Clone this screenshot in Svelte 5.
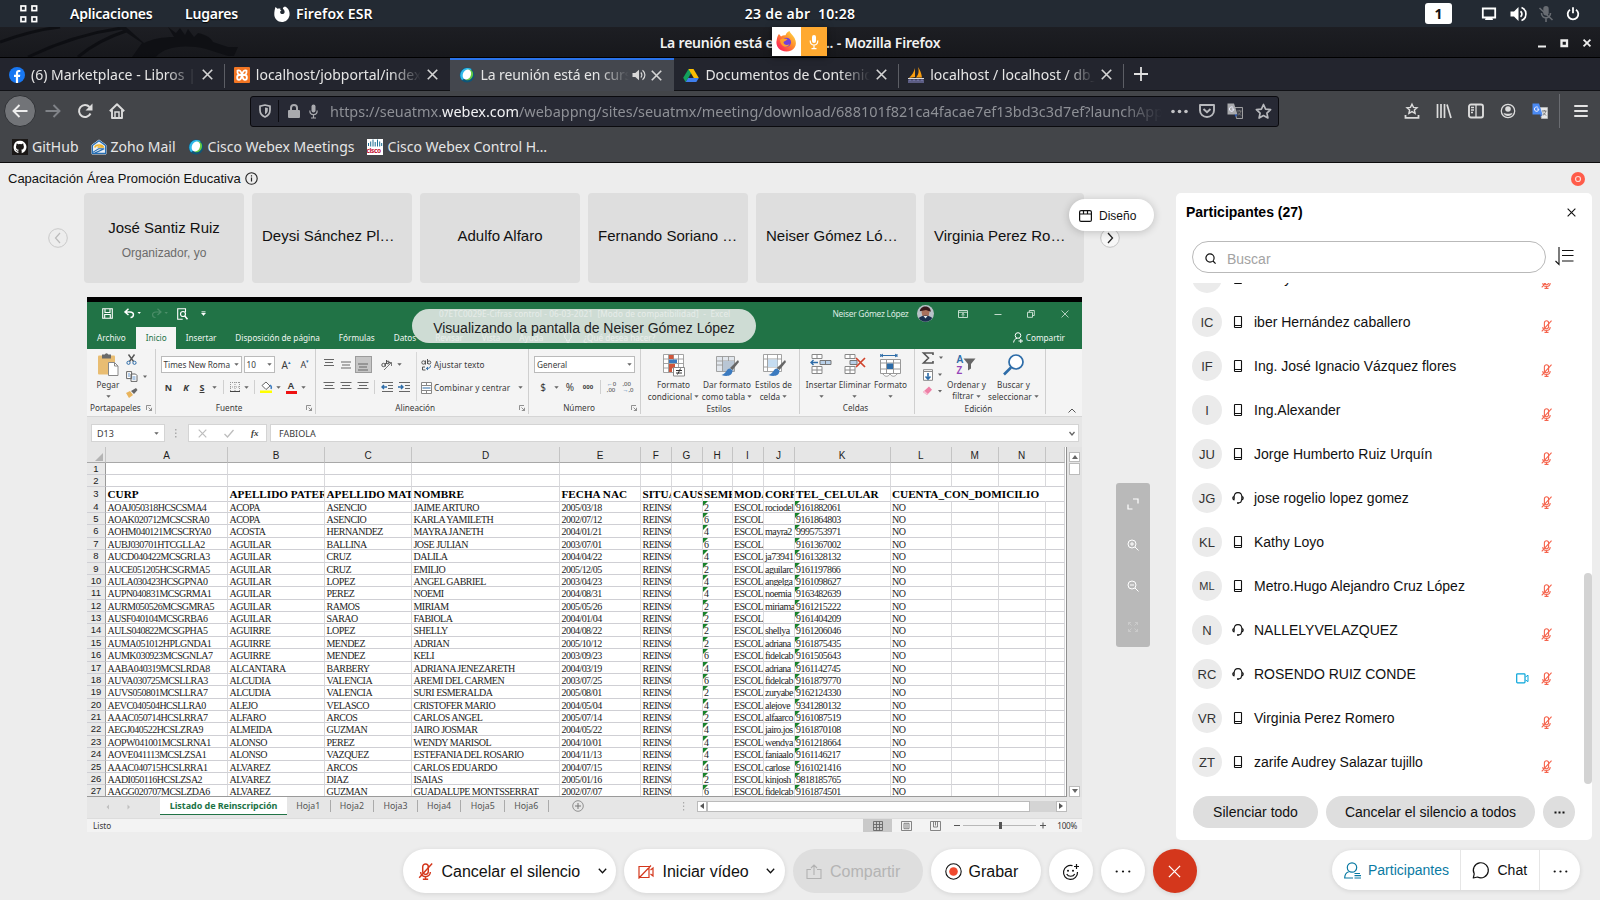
<script>
  const tabs = [
    { icon: 'fb', title: '(6) Marketplace - Libros | Facebook' },
    { icon: 'xampp', title: 'localhost/jobportal/index.php' },
    { icon: 'webex', title: 'La reunión está en curso...', active: true, audio: true },
    { icon: 'drive', title: 'Documentos de Contenido' },
    { icon: 'pma', title: 'localhost / localhost / db_jobs' }
  ];
  const tiles = [
    { name: 'José Santiz Ruiz', sub: 'Organizador, yo' },
    { name: 'Deysi Sánchez Pl…', long: true },
    { name: 'Adulfo Alfaro' },
    { name: 'Fernando Soriano …', long: true },
    { name: 'Neiser Gómez Ló…', long: true },
    { name: 'Virginia Perez Ro…', long: true }
  ];
  const people = [
    { ini: 'H', name: 'Henry', dev: 'phone' },
    { ini: 'IC', name: 'iber Hernández caballero', dev: 'phone' },
    { ini: 'IF', name: 'Ing. José Ignacio Vázquez flores', dev: 'phone' },
    { ini: 'I', name: 'Ing.Alexander', dev: 'phone' },
    { ini: 'JU', name: 'Jorge Humberto Ruiz Urquín', dev: 'phone' },
    { ini: 'JG', name: 'jose rogelio lopez gomez', dev: 'headset' },
    { ini: 'KL', name: 'Kathy Loyo', dev: 'phone' },
    { ini: 'ML', name: 'Metro.Hugo Alejandro Cruz López', dev: 'phone', small: true },
    { ini: 'N', name: 'NALLELYVELAZQUEZ', dev: 'headset' },
    { ini: 'RC', name: 'ROSENDO RUIZ CONDE', dev: 'headset', video: true },
    { ini: 'VR', name: 'Virginia Perez Romero', dev: 'phone' },
    { ini: 'ZT', name: 'zarife Audrey Salazar tujillo', dev: 'phone' }
  ];
  const letters = ['A', 'B', 'C', 'D', 'E', 'F', 'G', 'H', 'I', 'J', 'K', 'L', 'M', 'N', ''];
  const heads = ['CURP', 'APELLIDO PATERNO', 'APELLIDO MATERNO', 'NOMBRE', 'FECHA NAC', 'SITUACION', 'CAUSA', 'SEMESTRE', 'MODALIDAD', 'CORREO', 'TEL_CELULAR', 'CUENTA_CON_DOMICILIO', '', '', ''];
  const data = [
    ['AOAJ050318HCSCSMA4', 'ACOPA', 'ASENCIO', 'JAIME ARTURO', '2005/03/18', '2', 'rociodel', '9161882061'],
    ['AOAK020712MCSCSRA0', 'ACOPA', 'ASENCIO', 'KARLA YAMILETH', '2002/07/12', '6', '', '9161864803'],
    ['AOHM040121MCSCRYA0', 'ACOSTA', 'HERNANDEZ', 'MAYRA JANETH', '2004/01/21', '4', 'mayra2', '9995753971'],
    ['AUBJ030701HTCGLLA2', 'AGUILAR', 'BALLINA', 'JOSE JULIAN', '2003/07/01', '6', '', '9161367002'],
    ['AUCD040422MCSGRLA3', 'AGUILAR', 'CRUZ', 'DALILA', '2004/04/22', '4', 'ja73941', '9161328132'],
    ['AUCE051205HCSGRMA5', 'AGUILAR', 'CRUZ', 'EMILIO', '2005/12/05', '2', 'aguilarc', '9161197866'],
    ['AULA030423HCSGPNA0', 'AGUILAR', 'LOPEZ', 'ANGEL GABRIEL', '2003/04/23', '4', 'angelga', '9161098627'],
    ['AUPN040831MCSGRMA1', 'AGUILAR', 'PEREZ', 'NOEMI', '2004/08/31', '4', 'noemia', '9163482639'],
    ['AURM050526MCSGMRA5', 'AGUILAR', 'RAMOS', 'MIRIAM', '2005/05/26', '2', 'miriama', '9161215222'],
    ['AUSF040104MCSGRBA6', 'AGUILAR', 'SARAO', 'FABIOLA', '2004/01/04', '2', '', '9161404209'],
    ['AULS040822MCSGPHA5', 'AGUIRRE', 'LOPEZ', 'SHELLY', '2004/08/22', '2', 'shellya', '9161206046'],
    ['AUMA051012HPLGNDA1', 'AGUIRRE', 'MENDEZ', 'ADRIAN', '2005/10/12', '2', 'adriana', '9161875435'],
    ['AUMK030923MCSGNLA7', 'AGUIRRE', 'MENDEZ', 'KELI', '2003/09/23', '6', 'fidelcab', '9161505643'],
    ['AABA040319MCSLRDA8', 'ALCANTARA', 'BARBERY', 'ADRIANA JENEZARETH', '2004/03/19', '4', 'adriana', '9161142745'],
    ['AUVA030725MCSLLRA3', 'ALCUDIA', 'VALENCIA', 'AREMI DEL CARMEN', '2003/07/25', '6', 'fidelcab', '9161879770'],
    ['AUVS050801MCSLLRA7', 'ALCUDIA', 'VALENCIA', 'SURI ESMERALDA', '2005/08/01', '2', 'zuryabe', '9162124330'],
    ['AEVC040504HCSLLRA0', 'ALEJO', 'VELASCO', 'CRISTOFER MARIO', '2004/05/04', '4', 'alejove', '9341280132'],
    ['AAAC050714HCSLRRA7', 'ALFARO', 'ARCOS', 'CARLOS ANGEL', '2005/07/14', '2', 'alfaarco', '9161087519'],
    ['AEGJ040522HCSLZRA9', 'ALMEIDA', 'GUZMAN', 'JAIRO JOSMAR', '2004/05/22', '4', 'jairo.jos', '9161870108'],
    ['AOPW041001MCSLRNA1', 'ALONSO', 'PEREZ', 'WENDY MARISOL', '2004/10/01', '4', 'wendya', '9161218664'],
    ['AOVE041113MCSLZSA1', 'ALONSO', 'VAZQUEZ', 'ESTEFANIA DEL ROSARIO', '2004/11/13', '4', 'faniaalo', '9161146217'],
    ['AAAC040715HCSLRRA1', 'ALVAREZ', 'ARCOS', 'CARLOS EDUARDO', '2004/07/15', '4', 'carlose', '9161021416'],
    ['AADI050116HCSLZSA2', 'ALVAREZ', 'DIAZ', 'ISAIAS', '2005/01/16', '2', 'kinjosh', '9818185765'],
    ['AAGG020707MCSLZDA6', 'ALVAREZ', 'GUZMAN', 'GUADALUPE MONTSSERRAT', '2002/07/07', '6', 'fidelcab', '9161874501']
  ];
  const rows = data.map((d) => [d[0], d[1], d[2], d[3], d[4], 'REINSCRITO', '', d[5], 'ESCOL.', d[6], d[7], 'NO', '', '', '']);
  const blank = letters.map(() => '');
  const hojas = ['Hoja1', 'Hoja2', 'Hoja3', 'Hoja4', 'Hoja5', 'Hoja6'];
</script>

{#snippet webex(s)}
  <svg width={s} height={s} viewBox="0 0 16 16">
    <circle cx="8" cy="8" r="7.400" fill="#0f5578" />
    <path d="M3 13.200A7.400 7.400 0 0 1 12.500 2.100L9 9z" fill="#2fb9ea" />
    <path d="M9 2.500c4-.5 6 3 4.800 6.500-1 3.200-4 5-6.800 4z" fill="#62c944" />
    <ellipse cx="7.900" cy="7.500" rx="4" ry="5.200" fill="#fff" transform="rotate(25 7.900 7.500)" />
  </svg>
{/snippet}

{#snippet translate(a, b)}
  <svg width="17" height="16" viewBox="0 0 17 16">
    <path d="M7.500 4.500h8v11h-6z" fill={b} stroke="#bbb" stroke-width=".8" />
    <path d="M10 8h4.500M12.300 7v1M13.800 8c-.3 2-1.800 3.700-3 4.400M11 9.500l3 3" fill="none" stroke="#777" />
    <path d="M.5.5H7l3.500 11H.5z" fill={a} />
    <path d="M6.200 4.600A2.200 2.200 0 1 0 6.800 6H5" fill="none" stroke="#eef" stroke-width="1" />
    <path d="M7.500 11.500h3L8.500 14z" fill="#2456b5" />
  </svg>
{/snippet}

{#snippet closeX(s, c, w)}
  <svg width={s} height={s} viewBox="0 0 10 10"><path d="M.7.7l8.600 8.600M9.300.7L.7 9.300" stroke={c} stroke-width={w} fill="none" /></svg>
{/snippet}

{#snippet mutedMic(w, h, c)}
  <svg width={w} height={h} viewBox="0 0 12 14">
    <rect x="3.700" y=".8" width="4.600" height="8.600" rx="2.300" fill="none" stroke={c} stroke-width="1.200" />
    <path d="M2 7.500c0 5 8 5 8 0M6 11v2.200M3.800 13.400h4.400M11.500.5L.8 12.200" fill="none" stroke={c} stroke-width="1.200" />
  </svg>
{/snippet}

{#snippet caret()}
  <svg class="car" width="5" height="3" viewBox="0 0 5 3"><path d="M.3.3h4.400L2.500 2.700z" fill="#666" /></svg>
{/snippet}

{#snippet launch()}
  <svg class="launch" width="6" height="6" viewBox="0 0 6 6"><path d="M.5 5V.5H5M2.500 2.500l3 3M5.500 2.800v2.700H2.800" fill="none" stroke="#777" stroke-width=".8" /></svg>
{/snippet}

{#snippet lines(a, b, c, y)}
  <svg width="12" height="12" viewBox="0 0 12 12"><path d="M{a} {y}h{12 - 2 * a}M{b} {y + 3}h{12 - 2 * b}M{c} {y + 6}h{12 - 2 * c}" stroke="#666" stroke-width="1" /></svg>
{/snippet}

<div class="screen">
  <header class="top">
    <div class="left">
      <svg width="18" height="18" viewBox="0 0 18 18" fill="none" stroke="#fff" stroke-width="1.700"><rect x="1" y="1" width="4.600" height="4.600" /><rect x="12" y="1" width="4.600" height="4.600" /><rect x="1" y="12" width="4.600" height="4.600" /><rect x="12" y="12" width="4.600" height="4.600" /></svg>
      <b class="apl">Aplicaciones</b><b class="lug">Lugares</b>
      <svg class="ffx" width="16" height="16" viewBox="0 0 16 16"><path d="M1.500 1l2 1.800c1-.5 2-.5 3-.3C6 3.500 6.200 4 7.500 4.500c-1 .5-1.500.8-1.300 2 .5 2 3.600 2 4.300.2C11 5 10 3.500 9 3 8.500 2 9.500 1 11 .5 15 2.500 16 6 15.500 9.500 14.500 14 11 16 8 16 3.500 16 .5 12.500.3 9 .2 6 .7 3 1.500 1z" fill="#fff" /></svg>
      <b class="esr">Firefox ESR</b>
    </div>
    <b class="clock">23 de abr&nbsp; 10:28</b>
    <div class="right">
      <b class="ws">1</b>
      <svg width="16" height="14" viewBox="0 0 16 14"><path d="M1.800 1.500h12.400v9H1.800z" fill="none" stroke="#fff" stroke-width="1.800" /><path d="M4 13h8l-1-3H5z" fill="#fff" /></svg>
      <svg width="16" height="16" viewBox="0 0 16 16"><path d="M.5 5.500H4L8.500 1v14L4 10.500H.5z" fill="#fff" /><path d="M10.500 5.200a3.500 3.500 0 0 1 0 5.600M11.500 1.500a7 7 0 0 1 0 13" fill="none" stroke="#fff" stroke-width="1.700" /></svg>
      <svg width="16" height="16" viewBox="0 0 16 16"><rect x="5.300" y="0" width="5.400" height="9.500" rx="2.700" fill="#686c72" /><path d="M3.500 7c0 6.500 9 6.500 9 0M8 12v4M1.500 2l13 12" fill="none" stroke="#686c72" stroke-width="1.600" /></svg>
      <svg width="14" height="14" viewBox="0 0 14 14"><path d="M4 2.700a5.300 5.300 0 1 0 6 0M7 .3v6" fill="none" stroke="#fff" stroke-width="1.800" /></svg>
    </div>
  </header>

  <div class="titlebar">
    <svg class="dragon" width="240" height="30" viewBox="0 0 240 30"><path d="M0 15C22 7 42 2 60 0M28 30C55 17 85 6 122 1M78 30C92 18 108 10 126 4" fill="none" stroke="#0b0c10" stroke-width="3" /><path d="M118 0h8l18 16c8-4 18-6 30-6l-6-10 8 6 4-5 5 7 3-6 6 8 4-4c9 2 13 5 15 9l15 5h10l-4 9h-6l-22-7c-22-5-42-2-50 8h-24l10-14z" fill="#0d0e12" /></svg>
    <b class="wt">La reunión está en curso... - Mozilla Firefox</b>
    <div class="sharing">
      <span class="ff"><svg width="21" height="21" viewBox="0 0 21 21"><defs><linearGradient id="fx" x1="1" y1="0" x2="0" y2="1"><stop offset="0" stop-color="#ffe94a" /><stop offset=".45" stop-color="#ff8a2b" /><stop offset=".8" stop-color="#ff3350" /><stop offset="1" stop-color="#e0287a" /></linearGradient></defs><path d="M3 3l2 2.500C6.500 4.500 8 4 9.500 4.300 10 2.500 11.500 1 13.500 0c.5 2 3 3.500 5 7 4 7.500-1 13.500-8 13.500S-1 15 .8 8.500C1.200 6 2 4 3 3z" fill="url(#fx)" /><circle cx="10.500" cy="11.300" r="4.500" fill="#7440d8" /><path d="M4 9c2-2 5-1.500 7.500-1-1 2-2.500 1.500-4 3 0 3 4 4 6 2-2 5-9 3-9.500-4z" fill="#ffa02b" /></svg></span>
      <span class="mc"><svg width="10" height="16" viewBox="0 0 10 16"><rect x="3" y="1" width="4" height="8" rx="2" fill="#fff" /><path d="M1.200 6.500c0 6 7.600 6 7.600 0M5 11v3.500M2.500 14.700h5" fill="none" stroke="#fff" stroke-width="1.200" /></svg></span>
    </div>
    <div class="wc">
      <svg width="8" height="10" viewBox="0 0 8 10"><path d="M0 8.500h8" stroke="#eee" stroke-width="2" /></svg>
      <svg width="9" height="9" viewBox="0 0 9 9"><path d="M1.500 1.500h5.500v5.500H1.500z" fill="none" stroke="#eee" stroke-width="2.300" /></svg>
      {@render closeX(8, '#eee', 2.200)}
    </div>
  </div>

  <nav class="tabs">
    {#each tabs as t}
      <div class="tab" class:active={t.active}>
        <span class="fav">
          {#if t.icon === 'fb'}
            <svg width="16" height="16" viewBox="0 0 16 16"><circle cx="8" cy="8" r="8" fill="#1877f2" /><path d="M6.900 16V10H5V7.700h1.900V6c0-2 1.200-3 2.900-3l1.500.1v2h-1c-.9 0-1.200.5-1.200 1.100v1.500h2.200L10.900 10H9.100v6z" fill="#fff" /></svg>
          {:else if t.icon === 'xampp'}
            <svg width="16" height="16" viewBox="0 0 16 16"><rect width="16" height="16" rx="1" fill="#f37623" /><path d="M3.500 3.500c-.5 3.500 1 4.500 4.500 4.500s5-1 4.500-4.500c-2-.5-3.500 0-4.500 4.500-1-4.500-2.500-5-4.500-4.500zM5 12.800c-2.500 0-2.500-4.500 0-4.800h6c2.500.3 2.500 4.800 0 4.800S8.700 10 8 8c-.7 2-.5 4.800-3 4.800z" fill="none" stroke="#fff" stroke-width="1.800" stroke-linejoin="round" /></svg>
          {:else if t.icon === 'webex'}
            {@render webex(16)}
          {:else if t.icon === 'drive'}
            <svg width="16" height="16" viewBox="0 0 16 16"><path d="M5.500 2h5L5.300 11 2.600 15 .2 10.800z" fill="#12a05c" /><path d="M5.500 2h5l5.300 9h-5z" fill="#fdbd00" /><path d="M5.200 11h10.600l-2.500 4H2.700z" fill="#3f7fee" /></svg>
          {:else}
            <svg width="16" height="16" viewBox="0 0 16 16"><path d="M7 1C6 5 4 8 1 11l6-1zM10 0c1 4 1 7-2 10.500h6C13.500 6 12 3 10 0z" fill="#f89c0e" /><path d="M0 11.500h16" stroke="#ddd" /><path d="M1 16v-3h2v3M5 16v-3h2v3M9 16v-3h2v3M13 16v-3h2v3" stroke="#8283bd" stroke-width="1.200" fill="none" /></svg>
          {/if}
        </span>
        <span class="tt">{t.title}</span>
        {#if t.audio}
          <svg class="aud" width="14" height="12" viewBox="0 0 14 12"><path d="M.5 4h2.800L7 .8v10.400L3.300 8H.5z" fill="#d8d8d8" /><path d="M8.800 3.500a3.500 3.500 0 0 1 0 5M10.500 1.200a6 6 0 0 1 0 9.600" fill="none" stroke="#d8d8d8" stroke-width="1.200" /></svg>
        {/if}
        {@render closeX(11, '#d4d4d4', 1.500)}
      </div>
    {/each}
    <svg class="plus" width="14" height="14" viewBox="0 0 14 14"><path d="M7 0v14M0 7h14" stroke="#e0e0e0" stroke-width="1.800" /></svg>
  </nav>

  <div class="toolbar">
    <span class="back"><svg width="16" height="14" viewBox="0 0 16 14"><path d="M15.500 7H1.500M7.500 1l-6 6 6 6" fill="none" stroke="#eee" stroke-width="1.900" /></svg></span>
    <svg class="fwd" width="16" height="14" viewBox="0 0 16 14"><path d="M.5 7h14M8.500 1l6 6-6 6" fill="none" stroke="#808388" stroke-width="1.900" /></svg>
    <svg class="rel" width="16" height="16" viewBox="0 0 16 16"><path d="M13.500 10.500A6 6 0 1 1 12.500 4" fill="none" stroke="#dcdcdc" stroke-width="2" /><path d="M15.500.5v7h-7z" fill="#dcdcdc" /></svg>
    <svg class="home" width="16" height="16" viewBox="0 0 16 16"><path d="M.8 8.300L8 1.200l7.200 7.100M3 7v8h10V7" fill="none" stroke="#dcdcdc" stroke-width="1.900" stroke-linejoin="round" /><path d="M6 15V9h4v6" fill="none" stroke="#dcdcdc" stroke-width="1.500" /></svg>
    <div class="url">
      <svg class="sh" width="12" height="14" viewBox="0 0 12 14"><path d="M6 1L1 2.200V6c0 3.500 2 5.700 5 7 3-1.300 5-3.500 5-7V2.200z" fill="none" stroke="#b8b9bd" stroke-width="1.700" /><path d="M6 3.500v7c2-1.200 2.800-2.700 2.800-4.500V4z" fill="#b8b9bd" /></svg>
      <i></i>
      <svg width="12" height="14" viewBox="0 0 12 14"><rect y="6" width="12" height="8" rx="1" fill="#a9aaae" /><path d="M3 6.500V4a3 3 0 0 1 6 0v2.500" fill="none" stroke="#a9aaae" stroke-width="2" /></svg>
      <svg class="um" width="9" height="15" viewBox="0 0 9 15"><rect x="2.500" y=".5" width="4" height="8" rx="2" fill="#a9aaae" /><path d="M.8 6.500c0 5.500 7.400 5.500 7.400 0M4.500 10.500V14M2 14h5" fill="none" stroke="#a9aaae" stroke-width="1.200" /></svg>
      <span class="ut">https://seuatmx.<em>webex.com</em>/webappng/sites/seuatmx/meeting/download/688101f821ca4facae7ef13bd3c3d7ef?launchApp=true</span>
      <svg class="ud" width="17" height="5" viewBox="0 0 17 5" fill="#c2c2c5"><circle cx="2" cy="2.500" r="1.800" /><circle cx="8.500" cy="2.500" r="1.800" /><circle cx="15" cy="2.500" r="1.800" /></svg>
      <svg width="16" height="14" viewBox="0 0 16 14"><path d="M1 1h14v5.500a7 6.500 0 0 1-14 0z" fill="none" stroke="#b8b9bd" stroke-width="1.900" stroke-linejoin="round" /><path d="M4.500 5L8 8.300 11.500 5" fill="none" stroke="#b8b9bd" stroke-width="1.900" /></svg>
      {@render translate('#aaabae', '#33353f')}
      <svg width="17" height="16" viewBox="0 0 17 16"><path d="M8.500 1.500l2.100 4.600 5 .6-3.700 3.400 1 4.900-4.400-2.500L4.100 15l1-4.900L1.400 6.700l5-.6z" fill="none" stroke="#b8b9bd" stroke-width="1.700" stroke-linejoin="round" /></svg>
    </div>
    <div class="tools">
      <svg width="16" height="16" viewBox="0 0 16 16"><path d="M8 1.200l1.500 3.200 3.500.4L10.400 7l.7 3.300L8 8.600l-3.100 1.700L5.600 7 3 4.800l3.500-.4z" fill="none" stroke="#dcdcdc" stroke-width="1.400" /><path d="M1.500 12v2.800h13V12" fill="none" stroke="#dcdcdc" stroke-width="1.800" /></svg>
      <svg width="16" height="16" viewBox="0 0 16 16"><path d="M1.500 1v14M5 1v14M8.500 1v14M11 1.500L15 15" fill="none" stroke="#dcdcdc" stroke-width="1.700" /></svg>
      <svg width="16" height="16" viewBox="0 0 16 16"><rect x="1" y="1.500" width="14" height="13" rx="2" fill="none" stroke="#dcdcdc" stroke-width="1.900" /><path d="M8 2v12M3 4.500h3M3 7h3M3 9.500h2" stroke="#dcdcdc" stroke-width="1.300" /></svg>
      <svg width="16" height="16" viewBox="0 0 16 16"><circle cx="8" cy="8" r="6.700" fill="none" stroke="#dcdcdc" stroke-width="1.300" /><circle cx="8" cy="6" r="2.800" fill="#dcdcdc" /><path d="M3.500 10c2 1 7 1 9 0-1 4-8 4-9 0z" fill="#dcdcdc" /></svg>
      {@render translate('#4a8af4', '#e8e8e8')}
      <i></i>
      <svg width="14" height="14" viewBox="0 0 14 14"><path d="M1 2h12M1 7h12M1 12h12" stroke="#e4e4e4" stroke-width="2" stroke-linecap="round" /></svg>
    </div>
  </div>

  <div class="marks">
    <svg width="16" height="16" viewBox="0 0 16 16"><rect width="16" height="16" fill="#1b1817" /><path d="M8 1.800a6.300 6.300 0 0 0-2 12.300c.3 0 .4-.1.400-.3v-1.300c-1.800.3-2.200-.7-2.400-1.200-.3-.5-.6-.7-.7-.9.800-.2 1.300.9 1.600 1.200.5.400 1 .3 1.500.1 0-.4.200-.7.400-.9C5 10.600 4 9.800 4 7.800c0-.7.200-1.200.6-1.700-.1-.2-.3-.8.1-1.600.6 0 1.200.4 1.600.7a6 6 0 0 1 3.200 0c.5-.3 1-.7 1.700-.7.300.8.200 1.400.1 1.600.400.500.6 1 .6 1.700 0 2-1 2.700-2.700 2.900.3.300.5.700.5 1.300v1.800c0 .2.100.4.400.3A6.300 6.300 0 0 0 8 1.800z" fill="#fff" /></svg>
    <span>GitHub</span>
    <svg width="16" height="16" viewBox="0 0 17 16"><path d="M1 6l7.500-5.500L16 6v9.500H1z" fill="#e9eff7" stroke="#dbe6f3" /><path d="M1.500 6.300L8.500 1.300l7 5v8.500h-14z" fill="none" stroke="#266eb3" stroke-width="1.300" /><path d="M4 8.500c1-3.500 8-3.500 9-.5H7" fill="none" stroke="#f0b429" stroke-width="1.700" /><path d="M1.500 14L8 9.800h6L4 14.500" fill="none" stroke="#266eb3" stroke-width="1.200" /></svg>
    <span>Zoho Mail</span>
    {@render webex(16)}
    <span>Cisco Webex Meetings</span>
    <span class="cisco"><svg width="16" height="8" viewBox="0 0 16 8"><path d="M1.500 4v3M3.700 2.500v5M6 .5v7M8.200 3v4.500M10.500 .5v7M12.700 2.500v5M14.700 4v3" stroke="#1c6f94" stroke-width="1" /></svg><b>cisco</b></span>
    <span>Cisco Webex Control H…</span>
  </div>

  <main class="page">
    <div class="mtitle">
      <span>Capacitación Área Promoción Educativa</span>
      <svg width="13" height="13" viewBox="0 0 13 13"><circle cx="6.500" cy="6.500" r="5.700" fill="none" stroke="#222" stroke-width="1.100" /><path d="M6.500 5.500v4M6.500 3.200v1.300" stroke="#222" stroke-width="1.200" /></svg>
      <svg class="rec" width="14" height="14" viewBox="0 0 14 14"><circle cx="7" cy="7" r="7" fill="#ff5c4a" /><circle cx="7" cy="7" r="2.500" fill="none" stroke="#ffd9d4" stroke-width="1.200" /></svg>
    </div>
    <div class="content">
      <section class="stage">
        <div class="strip">
          <svg class="pa" width="20" height="20" viewBox="0 0 20 20"><circle cx="10" cy="10" r="9.300" fill="none" stroke="#c9c9c9" /><path d="M12 5l-4.500 5 4.500 5" fill="none" stroke="#bbb" stroke-width="1.200" /></svg>
          {#each tiles as t}
            <div class="tile" class:two={t.sub}><span class:long={t.long}>{t.name}</span>{#if t.sub}<small>{t.sub}</small>{/if}</div>
          {/each}
          <svg class="na" width="20" height="20" viewBox="0 0 20 20"><circle cx="10" cy="10" r="9.300" fill="#f7f7f7" stroke="#c4c4c4" /><path d="M8 5l4.500 5L8 15" fill="none" stroke="#222" stroke-width="1.300" /></svg>
          <div class="design"><svg width="13" height="12" viewBox="0 0 13 12"><rect x=".6" y=".6" width="11.800" height="10.800" rx="1.500" fill="none" stroke="#111" stroke-width="1.200" /><path d="M.6 4h11.800M4.500.6V4M8.500.6V4" stroke="#111" stroke-width="1.200" /></svg>Diseño</div>
        </div>

        <div class="share">
          <div class="excel">
            <div class="xtitle">
              <div class="qat">
                <svg width="11" height="11" viewBox="0 0 11 11"><path d="M.7.700h9.600v9.600H.7zM3 .7v3.800h5V.7M2.700 10.300V6.500h5.600v3.800" fill="none" stroke="#fff" stroke-width="1.100" /></svg>
                <svg class="q2" width="17" height="11" viewBox="0 0 17 11"><path d="M4.500.7L1 4l3.500 3M1 4h5c5 0 4 5.500.5 5.500" fill="none" stroke="#fff" stroke-width="1.500" /><path d="M13.500 4h3.400l-1.700 2z" fill="#fff" /></svg>
                <svg class="q3" width="17" height="11" viewBox="0 0 17 11"><path d="M6.500.7L10 4 6.500 7M10 4H5C0 4 1 9.500 4.500 9.500" fill="none" stroke="#4c8e69" stroke-width="1.200" /><path d="M13.500 4h3.400l-1.700 2z" fill="#4c8e69" /></svg>
                <svg class="q4" width="11" height="12" viewBox="0 0 11 12"><path d="M8.500 4V.700H.7v10.600h5" fill="none" stroke="#fff" stroke-width="1.100" /><circle cx="6" cy="6" r="2.500" fill="none" stroke="#fff" stroke-width="1.200" /><path d="M7.800 8l2.700 3.300" stroke="#fff" stroke-width="1.500" /></svg>
                <svg class="q5" width="5" height="5" viewBox="0 0 5 5"><path d="M.5.5h4M.5 2h4L2.500 4.500z" stroke="#fff" stroke-width=".6" fill="#fff" /></svg>
              </div>
              <span class="fname">07ETC0029E-Cifras control - 06-03-2021&nbsp; [Modo de compatibilidad]&nbsp; -&nbsp; Excel</span>
              <span class="usr">Neiser Gómez López</span>
              <svg class="ava" width="17" height="17" viewBox="0 0 17 17"><circle cx="8.500" cy="8.500" r="8.500" fill="#b9c2c8" /><path d="M4.500 7c0-5 8-5 8 0l-1 4.500H5.500z" fill="#a9715c" /><path d="M2.800 6.200c.5-6.500 11-6.500 11 .5L9 5z" fill="#38191c" /><path d="M1.800 13c3-3.500 10.500-3.500 13.400 0-3 5-10.500 5-13.400 0z" fill="#1b2f4f" /><path d="M6.500 11l2 2.500 2-2.500z" fill="#e8eef2" /></svg>
              <svg width="10" height="8" viewBox="0 0 10 8"><path d="M.5.5h9v7h-9zM.5 2.300h9M5 6.800V3.500M3.500 4.800L5 3.400l1.500 1.400" fill="none" stroke="#d4e6db" stroke-width=".9" /></svg>
              <svg width="8" height="8" viewBox="0 0 8 8"><path d="M.5 4.500h7" stroke="#d4e6db" stroke-width=".9" /></svg>
              <svg width="8" height="8" viewBox="0 0 8 8"><path d="M.5 2.300h5v5h-5zM2.300 2.300V.5h5v5H5.500" fill="none" stroke="#d4e6db" stroke-width=".9" /></svg>
              {@render closeX(8, '#d4e6db', 1)}
            </div>
            <div class="xtabs">
              <span>Archivo</span><span class="on">Inicio</span><span>Insertar</span><span>Disposición de página</span><span>Fórmulas</span><span>Datos</span><span>Revisar</span><span>Vista</span><span>Ayuda</span>
              <svg width="8" height="11" viewBox="0 0 8 11"><path d="M2.500 7.500C-1 5 1 .6 4 .6S9 5 5.500 7.500v1.300h-3zM2.800 10.300h2.400" fill="none" stroke="#fff" stroke-width=".9" /></svg>
              <span>¿Qué desea hacer?</span>
              <span class="comp"><svg width="10" height="11" viewBox="0 0 10 11"><circle cx="5" cy="3.500" r="2.800" fill="none" stroke="#fff" /><path d="M.6 10.500C1 8 2 6.800 4 6.300M6.500 6.500l.5.300M5.500 9h4.500M7.800 7v4" fill="none" stroke="#fff" /></svg>Compartir</span>
            </div>
            <div class="viewing">Visualizando la pantalla de Neiser Gómez López</div>

            <div class="ribbon">
              <div class="grp g1">
                <div class="body">
                  <div class="big pegar"><svg width="22" height="24" viewBox="0 0 22 24"><rect x="1" y="2.500" width="17" height="19" rx="1" fill="#e9bd72" /><rect x="5" y="1.500" width="9" height="4" fill="#6a6a6a" /><circle cx="9.500" cy="1.800" r="1.600" fill="#6a6a6a" /><path d="M11.500 9.500h6l3.500 3.500v9.500h-9.500z" fill="#fff" stroke="#888" /><path d="M17.500 9.500V13H21" fill="none" stroke="#888" /></svg><span>Pegar</span>{@render caret()}</div>
                  <div class="clip">
                    <svg width="11" height="11" viewBox="0 0 11 11"><path d="M2.500.5l5 7M8.500.5l-5 7" stroke="#555" stroke-width="1.400" /><circle cx="2.500" cy="8.800" r="1.600" fill="none" stroke="#2d6ca8" /><circle cx="8.500" cy="8.800" r="1.600" fill="none" stroke="#2d6ca8" /></svg>
                    <svg width="24" height="11" viewBox="0 0 24 11"><path d="M.6.600h5v7h-5zM5 3h4.500l1.500 1.500V10.400H5z" fill="#fff" stroke="#666" /><path d="M6.500 6h3M6.500 8h3M2 3h2M2 5h2" stroke="#3b7abf" stroke-width=".8" /><path d="M17 4.500h4L19 7z" fill="#666" /></svg>
                    <svg width="12" height="10" viewBox="0 0 12 10"><path d="M0 5l4-2 3 4-4 3z" fill="#e9b45c" /><path d="M5 3l5-3 1.500 2L8 6z" fill="#666" /></svg>
                  </div>
                </div>
                <div class="lab"><span>Portapapeles</span>{@render launch()}</div>
              </div>
              <div class="grp g2">
                <div class="body col">
                  <div class="r1"><span class="combo c1">Times New Roma{@render caret()}</span><span class="combo c2">10{@render caret()}</span><span class="aa">A<sup>▴</sup></span><span class="aa s">A<sup>▾</sup></span></div>
                  <div class="r2"><b>N</b><b><em>K</em></b><b><u>S</u></b>{@render caret()}<i></i>
                    <svg width="10" height="10" viewBox="0 0 10 10"><path d="M.5 0v10M5 0v10M9.500 0v10M0 .5h10M0 5h10" stroke="#999" stroke-dasharray="1 1" /><path d="M0 9.500h10" stroke="#444" /></svg>
                    {@render caret()}<i></i>
                    <svg width="12" height="12" viewBox="0 0 12 12"><path d="M2 4.500L6 1l4 4-4 3.500z" fill="#fff" stroke="#666" /><path d="M10 4c2 1.500 1.500 3 1 4" fill="none" stroke="#3b7abf" stroke-width="1.400" /><path d="M0 9.500h12V12H0z" fill="#ff0" /></svg>
                    {@render caret()}<span class="fc">A</span>{@render caret()}</div>
                </div>
                <div class="lab"><span>Fuente</span>{@render launch()}</div>
              </div>
              <div class="grp g3">
                <div class="body">
                  <div class="al">
                    <div class="a1">{@render lines(1, 2, 1, 0.5)}{@render lines(1, 2, 1, 3)}<span class="sel">{@render lines(1, 2, 1, 5)}</span><b></b><svg width="12" height="12" viewBox="0 0 12 12"><path d="M3 11L10.500 3.500M10.500 7V3.500H7" fill="none" stroke="#777" /><circle cx="2.500" cy="6" r="1.700" fill="none" stroke="#555" /><path d="M4.400 4v3.500M5.500 1v4" stroke="#555" /><circle cx="7" cy="3.500" r="1.400" fill="none" stroke="#555" /></svg>{@render caret()}</div>
                    <div class="a2">{@render lines(0.5, 2, 0.5, 1.5)}{@render lines(0.5, 2, 0.5, 1.5)}{@render lines(0.5, 2, 0.5, 1.5)}<i></i>
                      <svg width="12" height="12" viewBox="0 0 12 12"><path d="M1 1.500h11M7 4.500h5M7 7.500h5M1 10.500h11" stroke="#666" /><path d="M6 6H1M3 4L1 6l2 2" fill="none" stroke="#2d6ca8" stroke-width="1.400" /></svg>
                      <svg width="12" height="12" viewBox="0 0 12 12"><path d="M1 1.500h11M7 4.500h5M7 7.500h5M1 10.500h11" stroke="#666" /><path d="M0 6h5M3 4l2 2-2 2" fill="none" stroke="#2d6ca8" stroke-width="1.400" /></svg></div>
                  </div>
                  <div class="ar">
                    <div><svg width="11" height="12" viewBox="0 0 11 12"><circle cx="2.500" cy="3.500" r="1.700" fill="none" stroke="#555" /><path d="M4.500 1.500v4M6.500 0v5M4 8H1.500v3h3" fill="none" stroke="#555" /><circle cx="8.200" cy="3.500" r="1.600" fill="none" stroke="#555" /><path d="M9.500 6.500c0 2-1 3-4 3M7 8L5.300 9.500 7 11" fill="none" stroke="#2d6ca8" /></svg>Ajustar texto</div>
                    <div><svg width="11" height="12" viewBox="0 0 11 12"><path d="M.5.500h10v11H.5zM.5 3.500h10M.5 8.500h10M5.500.5v3M5.500 8.500v3" fill="#fff" stroke="#888" /><path d="M1.500 6h8" stroke="#2d6ca8" /></svg>Combinar y centrar{@render caret()}</div>
                  </div>
                </div>
                <div class="lab"><span>Alineación</span>{@render launch()}</div>
              </div>
              <div class="grp g4">
                <div class="body col">
                  <div class="r1"><span class="combo c3">General{@render caret()}</span></div>
                  <div class="r2n"><span class="big1">$</span>{@render caret()}<span class="big1">%</span><b>000</b><i></i><span class="dec"><u>←</u>0<br />,00</span><span class="dec">,00<br /><u>→</u>,0</span></div>
                </div>
                <div class="lab"><span>Número</span>{@render launch()}</div>
              </div>
              <div class="grp g5">
                <div class="body">
                  <div class="big"><svg width="22" height="24" viewBox="0 0 22 24"><path d="M.5 1.500h20v18H.5zM.5 6h20M.5 10.500h20M.5 15h20M5.500 1.500v18M10.500 1.500v18M15.500 1.500v18" fill="#fff" stroke="#999" stroke-width=".9" /><path d="M6 2h4.500v4H6zM6 11h6v4H6zM6 15h3v4H6z" fill="#d0563b" /><path d="M6 6.500h8V10H6z" fill="#3b7abf" /><path d="M10.500 14.500h11v8.500h-11z" fill="#fff" stroke="#888" /><path d="M13 17.500h6M13 20h6M17.500 15.500l-3 6" stroke="#333" /></svg><span>Formato</span><span>condicional {@render caret()}</span></div>
                  <div class="big"><svg width="24" height="24" viewBox="0 0 24 24"><path d="M1.500 3.500h18v15h-18zM1.500 8h18M1.500 12h18M7.500 3.500v15M13.500 3.500v15" fill="#e2e7ed" stroke="#999" stroke-width=".9" /><path d="M8 8h11v10H8z" fill="#b9c6d4" /><path d="M23 7l-8 8 2.500 2L24 9z" fill="#666" /><path d="M15 15.500c-4 0-3 5-8.500 6.500 5 2 11 1 11-4.500z" fill="#3b7abf" /></svg><span>Dar formato</span><span>como tabla {@render caret()}</span></div>
                  <div class="big"><svg width="24" height="24" viewBox="0 0 24 24"><path d="M1.500 1.500h18v17h-18zM1.500 6h18M1.500 14h18M5.500 1.500v17M15.500 1.500v17" fill="#fff" stroke="#999" stroke-width=".9" /><path d="M6 6.500h9.500V14H6z" fill="#c5dcf1" /><path d="M23 7l-8 8 2.500 2L24 9z" fill="#666" /><path d="M15 15.500c-4 0-3 5-8.500 6.500 5 2 11 1 11-4.500z" fill="#3b7abf" /></svg><span>Estilos de</span><span>celda {@render caret()}</span></div>
                </div>
                <div class="lab"><span>Estilos</span></div>
              </div>
              <div class="grp g6">
                <div class="body">
                  <div class="big"><svg width="22" height="24" viewBox="0 0 22 24"><path d="M2 1.500h10v4H2zM7 1.500v4M2 13.500h10v7H2zM2 17h10M7 13.500v7" fill="#fff" stroke="#888" /><path d="M10 7.500h11v4H10zM15.500 7.500v4" fill="#b9d0e8" stroke="#777" /><path d="M8 9.500H1M3.500 7L1 9.500 3.500 12" fill="none" stroke="#2d6ca8" stroke-width="1.400" /></svg><span>Insertar</span>{@render caret()}</div>
                  <div class="big"><svg width="24" height="24" viewBox="0 0 24 24"><path d="M2 1.500h10v4H2zM7 1.500v4M2 13.500h10v7H2zM2 17h10M7 13.500v7" fill="#fff" stroke="#888" /><path d="M7 7.500h7v4H7z" fill="#b9d0e8" stroke="#777" /><path d="M13 5l9 9M22 5l-9 9" stroke="#d0432c" stroke-width="1.700" /></svg><span>Eliminar</span>{@render caret()}</div>
                  <div class="big"><svg width="22" height="24" viewBox="0 0 22 24"><path d="M.7 1v3M17 1v3M1 2.500h16M3 1L1 2.500 3 4M15 1l2 1.500L15 4" fill="none" stroke="#2d6ca8" /><path d="M.5 6.500h20v14H.5zM.5 10h20M.5 16h20M6.500 6.500v14M13.500 6.500v14" fill="#fff" stroke="#999" /><path d="M7 10.500h6V16H7z" fill="#2d6ca8" /><path d="M3 21c2 3 5 3 7 0 2 3 5 3 7 0" fill="#fff" stroke="#999" /></svg><span>Formato</span>{@render caret()}</div>
                </div>
                <div class="lab"><span>Celdas</span></div>
              </div>
              <div class="grp g7">
                <div class="body">
                  <div class="ed">
                    <svg width="22" height="12" viewBox="0 0 22 12"><path d="M11 3V1H1.500l5 5-5 5H11V9" fill="none" stroke="#555" stroke-width="1.600" /><path d="M17 4.500h4L19 7z" fill="#666" /></svg>
                    <svg width="22" height="12" viewBox="0 0 22 12"><path d="M1.500.700h9v10.600h-9z" fill="#fff" stroke="#888" /><path d="M1.500 2.500h9" stroke="#888" /><path d="M6 4v6M3.500 7.500L6 10l2.500-2.500" fill="none" stroke="#2d6ca8" stroke-width="1.600" /><path d="M16 4.500h4L18 7z" fill="#666" /></svg>
                    <svg width="22" height="10" viewBox="0 0 22 10"><path d="M1 6l6-5.500 3 3.200L5 9z" fill="#ee7fa6" /><path d="M1 6l1.500-1.300L6 8 5 9z" fill="#f7c3d5" /><path d="M16 4h4l-2 2.500z" fill="#666" /></svg>
                  </div>
                  <div class="big ord"><div class="az"><span class="azl"><b>A</b><b class="z">Z</b></span><svg width="13" height="13" viewBox="0 0 13 13"><path d="M.5.5h12L8 6v4.500l-3 2V6z" fill="#666" /></svg></div><span>Ordenar y</span><span>filtrar {@render caret()}</span></div>
                  <div class="big"><svg width="24" height="24" viewBox="0 0 24 24"><circle cx="14" cy="9" r="7" fill="#fff" stroke="#2d6ca8" stroke-width="1.700" /><path d="M9 14.500L2 21.500" stroke="#2d6ca8" stroke-width="2.600" /></svg><span>Buscar y</span><span>seleccionar {@render caret()}</span></div>
                </div>
                <div class="lab"><span>Edición</span></div>
              </div>
              <svg class="coll" width="8" height="5" viewBox="0 0 8 5"><path d="M.5 4.500L4 1l3.500 3.500" fill="none" stroke="#555" /></svg>
            </div>

            <div class="formula">
              <span class="nb">D13{@render caret()}</span>
              <svg width="2" height="9" viewBox="0 0 2 9" fill="#aaa"><path d="M0 0h1.500v1.500H0zM0 3.500h1.500V5H0zM0 7h1.500v1.500H0z" /></svg>
              <span class="fx"><svg width="9" height="9" viewBox="0 0 9 9"><path d="M.7.700l7.600 7.600M8.300.7L.7 8.300" stroke="#bdbdbd" stroke-width="1.200" /></svg><svg width="10" height="9" viewBox="0 0 10 9"><path d="M.5 5L3.500 8l6-7" fill="none" stroke="#bdbdbd" stroke-width="1.300" /></svg><em>fx</em></span>
              <span class="fv">FABIOLA<svg width="6" height="5" viewBox="0 0 6 5"><path d="M.5 1L3 4l2.500-3" fill="none" stroke="#666" stroke-width="1.300" /></svg></span>
            </div>

            <div class="sheet">
              <div class="cells">
                <div class="row hd"><span class="rn"><svg width="8" height="8" viewBox="0 0 8 8"><path d="M8 0v8H0z" fill="#b4b4b4" /></svg></span>{#each letters as l}<span>{l}</span>{/each}</div>
                <div class="row e"><span class="rn">1</span>{#each blank as b}<span>{b}</span>{/each}</div>
                <div class="row e"><span class="rn">2</span>{#each blank as b}<span>{b}</span>{/each}</div>
                <div class="row h3"><span class="rn">3</span>{#each heads as h, i}<span class:over={i === 11} class:bare={i === 12 || i === 13}>{h}</span>{/each}</div>
                {#each rows as r, n}
                  <div class="row"><span class="rn">{n + 4}</span>{#each r as c, i}<span class:flag={i === 7 || i === 10}>{c}</span>{/each}</div>
                {/each}
              </div>
              <div class="vs">
                <span class="vb"><svg width="6" height="4" viewBox="0 0 6 4"><path d="M0 4h6L3 0z" fill="#666" /></svg></span>
                <span class="vt"></span>
                <span class="vb dn"><svg width="6" height="4" viewBox="0 0 6 4"><path d="M0 0h6L3 4z" fill="#666" /></svg></span>
              </div>
            </div>

            <div class="stabs">
              <svg class="nav" width="26" height="6" viewBox="0 0 26 6"><path d="M3 .5v5L.5 3zM21.500.5v5L24 3z" fill="#c0c0c0" /></svg>
              <span class="act">Listado de Reinscripción</span>
              {#each hojas as h}<span class="hoja">{h}</span>{/each}
              <svg class="add" width="12" height="12" viewBox="0 0 12 12"><circle cx="6" cy="6" r="5.300" fill="none" stroke="#888" stroke-width=".9" /><path d="M6 3v6M3 6h6" stroke="#777" /></svg>
              <svg class="grip" width="2" height="9" viewBox="0 0 2 9" fill="#aaa"><path d="M0 0h1.200v1.500H0zM0 3.500h1.200V5H0zM0 7h1.200v1.500H0z" /></svg>
              <span class="hs"><i class="hb"><svg width="4" height="6" viewBox="0 0 4 6"><path d="M4 0v6L0 3z" fill="#555" /></svg></i><i class="ht"></i><i class="hb"><svg width="4" height="6" viewBox="0 0 4 6"><path d="M0 0v6l4-3z" fill="#555" /></svg></i></span>
            </div>
            <div class="status">
              <span>Listo</span>
              <i class="vw on"><svg width="10" height="10" viewBox="0 0 10 10"><path d="M.5.500h9v9h-9zM.5 3.500h9M.5 6.500h9M3.500.5v9M6.500.5v9" fill="none" stroke="#666" stroke-width=".9" /></svg></i>
              <i class="vw"><svg width="11" height="10" viewBox="0 0 11 10"><path d="M.5.500h10v9H.5zM3 2.300h5v5.400H3zM4 4h3M4 6h3" fill="none" stroke="#777" stroke-width=".9" /></svg></i>
              <i class="vw"><svg width="11" height="10" viewBox="0 0 11 10"><path d="M.5.500h10v9H.5zM3.500.5v5.500h4V.5M5.500.5v4" fill="none" stroke="#777" stroke-width=".9" /></svg></i>
              <svg class="zm" width="94" height="9" viewBox="0 0 94 9"><path d="M1 4.500h6M87 4.500h6M90 1.500v6" stroke="#555" /><path d="M10 4.500h73" stroke="#b8b8b8" /><path d="M46 1h3v7h-3z" fill="#555" /></svg>
              <span class="pc">100%</span>
            </div>
          </div>
          <div class="zoombar">
            <svg width="12" height="12" viewBox="0 0 12 12"><path d="M6 1h5v4.500M1 6.500V11h4.500" fill="none" stroke="#fff" stroke-width="1.200" /></svg>
            <svg width="12" height="12" viewBox="0 0 12 12"><circle cx="5" cy="5" r="4" fill="none" stroke="#fff" /><path d="M8 8l3.500 3.500M5 3v4M3 5h4" stroke="#fff" /></svg>
            <svg width="12" height="12" viewBox="0 0 12 12"><circle cx="5" cy="5" r="4" fill="none" stroke="#fff" /><path d="M8 8l3.500 3.500M3 5h4" stroke="#fff" /></svg>
            <svg width="12" height="12" viewBox="0 0 12 12"><path d="M1.500 4V1.500H4M1.500 1.500l3 3M8 1.500h2.500V4M10.500 1.500l-3 3M1.500 8v2.500H4M1.500 10.500l3-3M8 10.500h2.500V8M10.500 10.500l-3-3" fill="none" stroke="#ccc" stroke-width=".9" /></svg>
          </div>
        </div>
      </section>

      <aside class="panel">
        <div class="ph"><b>Participantes (27)</b>{@render closeX(9, '#111', 1.200)}</div>
        <div class="srow">
          <div class="search"><svg width="11" height="11" viewBox="0 0 11 11"><circle cx="5" cy="5" r="4.100" fill="none" stroke="#111" stroke-width="1.200" /><path d="M8 8l2.600 2.600" stroke="#111" stroke-width="1.200" /></svg><span>Buscar</span></div>
          <svg width="19" height="18" viewBox="0 0 19 18"><path d="M7 3.500h11.500M7 8.500h11.500M7 14h11.500M4 0v17.500L.5 14" fill="none" stroke="#111" stroke-width="1.100" /></svg>
        </div>
        <div class="list">
          {#each people as p}
            <div class="p">
              <span class="av" class:sm={p.small}>{p.ini}</span>
              {#if p.dev === 'phone'}
                <svg class="dv" width="12" height="12" viewBox="0 0 12 12"><rect x="2.500" y=".5" width="7" height="11" rx=".6" fill="none" stroke="#111" stroke-width="1.100" /><path d="M2.500 9.500h7" stroke="#111" /></svg>
              {:else}
                <svg class="dv" width="12" height="12" viewBox="0 0 12 12"><path d="M2.200 7.800C1.200 1.500 4 .6 6 .6s4.800.9 3.800 7.200M2 4.500C.3 4.500.3 8 2.500 8M10 4.500c1.700 0 1.700 3.500-.5 3.500 0 1.500-1 2.700-2.700 3" fill="none" stroke="#111" stroke-width="1.100" /><circle cx="6" cy="11" r="1" fill="#111" /></svg>
              {/if}
              <span class="nm">{p.name}</span>
              {#if p.video}
                <svg class="vd" width="13" height="11" viewBox="0 0 13 11"><rect x=".7" y=".8" width="8.300" height="9" rx=".8" fill="none" stroke="#07a5da" stroke-width="1.200" /><path d="M9.500 4l2.500-1.800v6.400L9.500 7" fill="none" stroke="#07a5da" /></svg>
              {/if}
              <span class="mm">{@render mutedMic(11, 13, '#f5644d')}</span>
            </div>
          {/each}
          <span class="sb"></span>
        </div>
        <div class="acts"><span class="b1">Silenciar todo</span><span class="b2">Cancelar el silencio a todos</span><span class="b3"><svg width="11" height="3" viewBox="0 0 11 3" fill="#111"><path d="M.5.500h2v2h-2zM4.500.5h2v2h-2zM8.500.5h2v2h-2z" /></svg></span></div>
      </aside>
    </div>

    <footer>
      <div class="ctl">
        <span class="pill w1">{@render mutedMic(15, 17, '#d4371c')}<span>Cancelar el silencio</span><svg class="ch" width="9" height="6" viewBox="0 0 9 6"><path d="M.8.800L4.500 4.700 8.200.8" fill="none" stroke="#111" stroke-width="1.300" /></svg></span>
        <span class="pill w2"><svg width="16" height="14" viewBox="0 0 16 14"><path d="M1 1.500h10v11H1zM12.500 5L15 3v8l-2.500-2M13 .5L.5 13.500" fill="none" stroke="#d4371c" stroke-width="1.200" /></svg><span>Iniciar vídeo</span><svg class="ch" width="9" height="6" viewBox="0 0 9 6"><path d="M.8.800L4.500 4.700 8.200.8" fill="none" stroke="#111" stroke-width="1.300" /></svg></span>
        <span class="pill w3"><svg width="16" height="16" viewBox="0 0 16 16"><path d="M5 5.500H1v9h14v-9h-4M8 11V1.500M5 4l3-3 3 3" fill="none" stroke="#b2b2b2" stroke-width="1.100" /></svg><span>Compartir</span></span>
        <span class="pill w4"><svg width="17" height="17" viewBox="0 0 17 17"><circle cx="8.500" cy="8.500" r="7.700" fill="none" stroke="#111" stroke-width="1.100" /><circle cx="8.500" cy="8.500" r="4.300" fill="#f0492e" /></svg><span>Grabar</span></span>
        <span class="pill rd"><svg width="18" height="18" viewBox="0 0 18 18"><path d="M10.500 2.700A7 7 0 1 0 15.500 9" fill="none" stroke="#111" stroke-width="1.200" /><circle cx="6" cy="7.800" r="1" fill="#111" /><circle cx="11" cy="7.800" r="1" fill="#111" /><path d="M4.700 11c1.500 3 6.500 3 8 0M14.500 1v5M12 3.500h5" fill="none" stroke="#111" stroke-width="1.200" /></svg></span>
        <span class="pill rd"><svg width="16" height="3" viewBox="0 0 16 3" fill="#111"><circle cx="1.700" cy="1.500" r="1.100" /><circle cx="8" cy="1.500" r="1.100" /><circle cx="14.300" cy="1.500" r="1.100" /></svg></span>
        <span class="pill rd red">{@render closeX(13, '#fff', 1)}</span>
      </div>
      <div class="seg">
        <span class="s1"><svg width="17" height="17" viewBox="0 0 17 17"><circle cx="8" cy="5.500" r="4.700" fill="none" stroke="#0a7aa3" stroke-width="1.200" /><path d="M9 16H.7c0-4 1.300-5.300 4-6.300M10.500 11.500H16M10.500 13.700H17M10.500 16H17" fill="none" stroke="#0a7aa3" stroke-width="1.200" /></svg>Participantes</span>
        <span class="s2"><svg width="17" height="17" viewBox="0 0 17 17"><path d="M1.300 16l.9-4.200A7.500 7.500 0 1 1 5.500 15z" fill="none" stroke="#111" stroke-width="1.200" stroke-linejoin="round" /></svg>Chat</span>
        <span class="s3"><svg width="15" height="3" viewBox="0 0 15 3" fill="#111"><circle cx="1.700" cy="1.500" r="1.100" /><circle cx="7.500" cy="1.500" r="1.100" /><circle cx="13.300" cy="1.500" r="1.100" /></svg></span>
      </div>
    </footer>
  </main>
</div>

<style>
  :global(body) { margin: 0; background: #ededed; }
  .screen { width: 1600px; height: 900px; overflow: hidden; display: flex; flex-direction: column; font-family: "Noto Sans", sans-serif; font-size: 14px; color: #e6e6e6; }
  .screen :global(*) { box-sizing: border-box; }
  svg { display: block; flex: none; overflow: visible; }
  i { font-style: normal; }

  .top { height: 27px; background: #232a33; display: grid; grid-template-columns: 1fr auto 1fr; align-items: center; flex: none; color: #fff; text-shadow: 0 1px 1px #000; white-space: nowrap; }
  .top b, .wt { font-weight: 600; letter-spacing: -.2px; }
  .left { display: flex; align-items: center; padding-left: 20px; }
  .top .apl { margin-left: 32px; width: 115px; }
  .top .lug { width: 89px; }
  .top .esr { margin-left: 6px; letter-spacing: .15px; }
  .top .clock { letter-spacing: .25px; }
  .right { display: flex; align-items: center; justify-content: flex-end; gap: 13px; padding-right: 20px; }
  .right svg:nth-of-type(3), .right svg:nth-of-type(4) { margin-left: -1px; }
  .top .ws { width: 27px; height: 21px; border-radius: 3px; background: #fff; color: #111; font-weight: 700; text-align: center; line-height: 21px; text-shadow: none; margin-right: 16px; }

  .titlebar { height: 31px; flex: none; background: linear-gradient(#1d1e23, #17181c); border-bottom: 1px solid #000; position: relative; display: flex; align-items: center; justify-content: center; color: #f2f2f2; }
  .dragon { position: absolute; left: 0; top: 0; overflow: hidden; opacity: .8; }
  .sharing { position: absolute; left: 772px; top: 0; display: flex; box-shadow: 0 1px 6px #0008; }
  .ff { width: 29px; height: 29px; background: #fff; display: grid; place-items: center; }
  .mc { width: 26px; height: 29px; background: #ffa930; display: grid; place-items: center; }
  .wc { position: absolute; right: 9.500px; top: 11px; display: flex; gap: 14px; align-items: center; }

  .tabs { height: 33px; flex: none; display: flex; align-items: center; background: #23252e; border-bottom: 1px solid #111216; }
  .tab { width: 224.800px; height: 32px; display: flex; align-items: center; padding: 0 12px 0 9px; position: relative; margin-top: 1px; }
  .tab::after { content: ""; position: absolute; right: 0; top: 5px; height: 24px; width: 1px; background: #5c5e65; }
  .tab.active { background: #44474e; border-top: 2px solid #2a73ea; height: 33px; padding-bottom: 1px; }
  .tab:nth-child(2)::after, .tab.active::after { display: none; }
  .fav { width: 16px; margin-right: 6px; }
  .tt { flex: 1; overflow: hidden; white-space: nowrap; mask-image: linear-gradient(90deg, #000 calc(100% - 30px), transparent); margin-right: 6px; line-height: 22px; }
  .active .tt { margin-right: 3px; letter-spacing: -.1px; }
  .aud { margin-right: 5px; }
  .plus { margin-left: 10px; }

  .toolbar { height: 40px; flex: none; background: #434549; display: flex; align-items: center; padding: 0 12px 0 4px; }
  .back { width: 32px; height: 32px; border-radius: 50%; background: #727478; border: 1px solid #303236; display: grid; place-items: center; }
  .fwd { margin-left: 9px; } .rel { margin-left: 16px; } .home { margin-left: 16px; }
  .url { margin-left: 125px; width: 1029px; height: 31px; border: 1px solid #0a0a0e; border-radius: 3px; background: #272934; display: flex; align-items: center; padding: 0 6px 0 8px; }
  .url i { width: 1px; height: 22px; background: #0c0c12; margin: 0 9px 0 7px; }
  .um { margin: 0 12px 0 9px; }
  .ut { width: 833px; overflow: hidden; white-space: nowrap; color: #8e9096; font-size: 14.450px; line-height: 24px; padding-top: 1px; margin-right: 9px; mask-image: linear-gradient(90deg, #000 calc(100% - 40px), transparent); }
  .ut em { font-style: normal; color: #f2f2f4; }
  .url .ud ~ svg { margin-left: 11px; }
  .url .ud ~ svg:nth-last-child(2) { margin-left: 12px; }
  .tools { display: flex; align-items: center; margin-left: auto; gap: 16px; }
  .tools i { width: 1px; height: 34px; background: #6a6c71; margin: 0 -2px 0 -6px; }

  .marks { height: 32px; flex: none; background: #434549; border-bottom: 1px solid #0c0c0d; display: flex; align-items: center; padding: 0 0 0 12px; white-space: nowrap; }
  .marks > span { margin: 0 12px 0 4px; line-height: 20px; }
  .marks > .cisco { margin: 0; width: 16px; height: 16px; background: #fff; line-height: 6px; overflow: hidden; }
  .marks > .cisco + span { margin-left: 5px; }
  .cisco b { display: block; font: 700 6.500px/7px "Noto Sans", sans-serif; color: #c01033; letter-spacing: -.4px; }

  .page { flex: 1; background: #ededed; color: #111; font-family: "Liberation Sans", Arial, sans-serif; display: flex; flex-direction: column; min-height: 0; }
  .mtitle { height: 30px; display: flex; align-items: center; padding: 1px 15px 0 8px; font-size: 13px; gap: 4px; flex: none; }
  .rec { margin-left: auto; }
  .content { display: flex; height: 647px; flex: none; }
  .stage { width: 1176px; display: flex; flex-direction: column; }
  .strip { height: 104px; display: flex; align-items: flex-start; padding-left: 48px; position: relative; }
  .pa { margin: 35px 8px 0 0; }
  .tile { width: 160px; height: 90px; border-radius: 4px; background: #dedede; margin-left: 8px; display: flex; flex-direction: column; align-items: center; justify-content: center; font-size: 15px; white-space: nowrap; padding-bottom: 6px; }
  .tile.two { padding: 2px 0 0; gap: 10px; }
  .tile .long { width: 140px; }
  .tile small { font-size: 12px; color: #6b6b6b; }
  .na { margin: 35px 0 0 16px; }
  .design { position: absolute; left: 1069px; top: 6px; width: 85px; height: 32px; border-radius: 16px; background: #fff; box-shadow: 0 1px 8px #0003; display: flex; align-items: center; gap: 7px; padding-left: 10px; font-size: 12px; padding-top: 2px; }

  .share { display: flex; padding-left: 87px; }
  .excel { width: 995px; height: 534px; border-top: 5px solid #000; background: #e6e6e6; position: relative; font-family: "Noto Sans", sans-serif; font-size: 8.200px; color: #3a3a3a; display: flex; flex-direction: column; white-space: nowrap; }
  .xtitle { height: 25px; background: #217346; color: #dcebe2; display: flex; align-items: center; padding: 0 13.500px 2px 15px; flex: none; }
  .qat { display: flex; align-items: center; width: 337px; }
  .q2 { margin-left: 11px; } .q3 { margin-left: 10px; } .q4 { margin-left: 9px; } .q5 { margin-left: 13px; }
  .fname { flex: 1; letter-spacing: .1px; }
  .usr { margin-right: 8px; font-size: 8.400px; letter-spacing: -.25px; }
  .ava { margin-right: 24px; }
  .ava + svg { margin-right: 26px; } .ava + svg + svg { margin-right: 25.500px; } .ava + svg + svg + svg { margin-right: 25.500px; }
  .xtabs { height: 22px; background: #217346; color: #f0f6f2; display: flex; align-items: center; padding: 0 0 2px 10px; flex: none; }
  .xtabs > span { margin-right: 19px; }
  .xtabs > span:first-child { margin-right: 10.500px; }
  .xtabs .on { background: #f5f5f5; color: #217346; height: 22px; line-height: 21px; width: 40px; text-align: center; margin: 2px 9.500px 0 0; }
  .xtabs > svg { margin: 0 11px 0 2px; }
  .xtabs .comp { margin: 0 17px 0 auto; display: flex; align-items: center; gap: 3px; }
  .viewing { position: absolute; left: 325px; top: 7px; width: 344px; height: 34px; border-radius: 17px; background: rgba(232, 236, 233, .87); color: #222; font: 14px/38px "Liberation Sans", Arial, sans-serif; text-align: center; }

  .ribbon { height: 68px; background: #f4f4f4; border-bottom: 1px solid #d5d5d5; display: flex; flex: none; align-items: flex-start; }
  .grp { height: 65px; border-right: 1px solid #cfcfcf; display: flex; flex-direction: column; padding-top: 3px; }
  .g1 { width: 68.500px; } .g2 { width: 160px; } .g3 { width: 213.500px; } .g4 { width: 112px; } .g5 { width: 158.500px; } .g6 { width: 115px; } .g7 { width: 131px; }
  .body { height: 50px; display: flex; }
  .body.col, .al, .ar { flex-direction: column; display: flex; }
  .lab { height: 13px; display: flex; align-items: center; justify-content: center; position: relative; line-height: 13px; padding-right: 12px; }
  .launch { position: absolute; right: 3px; top: 4px; }
  .g5 .lab, .g6 .lab, .g7 .lab { padding-right: 2px; }
  .g1 .lab { justify-content: flex-start; padding: 0 0 0 3px; }
  .g3 .lab { padding-right: 13px; } .g4 .lab { padding-right: 11px; }
  .car { display: inline-block; vertical-align: middle; }
  .big { display: flex; flex-direction: column; align-items: center; line-height: 11.600px; letter-spacing: .05px; }
  .big svg:first-child { margin-bottom: 2px; margin-top: 1px; }
  .big > .car { margin-top: 5px; }
  .big > .car:last-child { margin-top: 4px; }
  .pegar { width: 42px; }
  .clip { display: flex; flex-direction: column; gap: 6px; padding-top: 2px; margin-left: -3px; }
  .r1 { display: flex; height: 17px; margin: 4px 0 0 5px; align-items: center; gap: 2px; }
  .combo { height: 17px; background: #fff; border: 1px solid #bbb; display: flex; align-items: center; justify-content: space-between; padding: 0 2px 0 2px; }
  .c1 { width: 81px; } .c2 { width: 31px; } .c3 { width: 101px; }
  .aa { font-size: 10px; margin-left: 5px; width: 12px; line-height: 14px; }
  .aa sup { font-size: 5px; color: #2d6ca8; line-height: 0; vertical-align: 5px; }
  .aa.s { font-size: 9px; }
  .r2 { display: grid; grid-template-columns: 18px 17px 15px 10px 8px 14px 10px 5px 18px 8px 17px 8px; place-items: center; height: 20px; margin: 4px 0 0 4px; font-size: 9px; }
  .r2 i, .a2 i, .r2n i { width: 1px; height: 14px; background: #d0d0d0; }
  .fc { border-bottom: 3px solid #e11; line-height: 10px; font-size: 9.500px; font-weight: 600; width: 11px; text-align: center; }
  .al { width: 101px; border-right: 1px solid #d8d8d8; }
  .a1 { display: grid; grid-template-columns: 18px 17px 17px 6px 18px 7px; margin: 4px 0 0 4px; place-items: center; height: 17px; }
  .a2 { display: grid; grid-template-columns: 18px 17px 17px 6px 18px 16px; margin: 4px 0 0 4px; place-items: center; height: 20px; }
  .sel { background: #c6c6c6; border: 1px solid #9c9c9c; width: 17px; height: 17px; display: grid; place-items: center; }
  .ar div { display: flex; align-items: center; gap: 2.500px; padding-left: 4px; height: 17px; margin-top: 4px; letter-spacing: .12px; }
  .ar div + div { margin-top: 6px; }
  .ar .car { margin-left: 5px; }
  .r2n { display: grid; grid-template-columns: 16px 10px 18px 18px 6px 17px 16px; place-items: center; height: 20px; margin: 4px 0 0 6px; }
  .big1 { font-size: 10px; } .r2n b { font-size: 6px; }
  .dec { font-size: 6px; line-height: 6px; } .dec u { color: #2d6ca8; text-decoration: none; }
  .g5 .body { padding-left: 5px; } .g5 .big:nth-child(1) { width: 55px; } .g5 .big:nth-child(2) { width: 52px; } .g5 .big:nth-child(3) { width: 41px; }
  .g6 .body { padding-left: 5px; } .g6 .big:nth-child(1), .g6 .big:nth-child(2) { width: 33.500px; } .g6 .big:nth-child(3) { width: 38px; }
  .g7 .body { padding-left: 7px; }
  .ed { display: flex; flex-direction: column; gap: 5px; width: 25px; }
  .ord { width: 40px; } .ord + .big { width: 54px; }
  .az { display: flex; align-items: center; height: 24px; margin: 1px 0 2px; } .azl b { display: block; font-size: 10px; line-height: 11px; color: #2d6ca8; font-weight: 600; } .azl .z { color: #9445b8; }
  .coll { margin: 59px 0 0 22px; }

  .formula { height: 29.500px; flex: none; display: flex; align-items: center; padding: 3px 3px 0 4px; }
  .formula span { height: 18px; background: #fff; border: 1px solid #d4d4d4; display: flex; align-items: center; }
  .nb { width: 74px; justify-content: space-between; padding: 0 5px; font-size: 9px; }
  .formula > svg { margin: 0 11px 0 10px; }
  .fx { width: 79px; gap: 17px; padding-left: 9px; }
  .fx em { font: italic 700 9px "Liberation Serif", serif; }
  .formula .fv { flex: 1; margin-left: 3px; padding: 0 3px 0 8px; justify-content: space-between; font-size: 9px; }

  .sheet { display: flex; height: 350px; flex: none; overflow: hidden; }
  .cells { width: 980px; height: 350px; overflow: hidden; background: #fff; border-right: 1px solid #8f8f8f; border-bottom: 1px solid #9a9a9a; }
  .row { display: grid; grid-template-columns: 19px 122px 97px 87px 148px 81px 30.500px 31px 30px 31px 31px 96px 61.500px 46.500px 47px 19.500px; height: 12.390px; font: 10px/13.200px "Liberation Serif", "Times New Roman", serif; letter-spacing: -.53px; color: #1d1d1d; }
  .row > span { border-right: 1px solid #d9d9dc; border-bottom: 1px solid #cfcfd4; overflow: hidden; padding-left: 1.500px; position: relative; }
  .row > .rn { background: #e9e9e9; font: 9.500px/12.500px "Liberation Sans", Arial, sans-serif; letter-spacing: 0; text-align: center; border-right-color: #9a9a9a; color: #222; padding: 0; }
  .row.e { height: 12.100px; }
  .row.h3 { height: 14px; font-weight: 700; font-size: 11.200px; line-height: 14.500px; letter-spacing: 0; color: #000; }
  .row.h3 .over { overflow: visible; border-right: none; z-index: 1; }
  .row.h3 .bare { border-right: none; }
  .row.h3 .rn { line-height: 14px; }
  .row.hd { height: 16px; font: 10px/18px "Liberation Sans", Arial, sans-serif; letter-spacing: 0; }
  .row.hd > span { background: #e6e6e6; text-align: center; border-right-color: #c4c4c4; border-bottom-color: #a8a8a8; padding: 0; }
  .row.hd .rn { border-right-color: #c4c4c4; }
  .hd .rn svg { margin: 6px 0 0 8px; }
  .flag::before { content: ""; position: absolute; left: 0; top: 0; border-top: 5px solid #17822b; border-right: 5px solid transparent; }
  .vs { width: 15px; display: flex; flex-direction: column; align-items: center; padding: 5px 2px 0 2px; background: #e3e3e3; }
  .vb { width: 10.500px; height: 10.500px; background: #fff; border: 1px solid #bbb; display: grid; place-items: center; }
  .vt { width: 10.500px; height: 12.500px; background: #fff; border: 1px solid #bbb; margin-top: .5px; }
  .dn { margin-top: auto; }

  .stabs { height: 21.500px; display: flex; align-items: center; flex: none; font-size: 8.800px; color: #555; }
  .nav { margin: 0 28px 0 19px; }
  .act { width: 127px; height: 18px; background: #fff; border-bottom: 1.500px solid #217346; color: #217346; font-weight: 700; font-size: 9px; text-align: center; line-height: 18px; align-self: flex-start; letter-spacing: -.05px; }
  .hoja { width: 43.600px; border-right: 1px solid #aaa; height: 12px; line-height: 12px; text-align: center; margin-top: -2px; }
  .add { margin: -2px 0 0 23px; } .grip { margin-left: 99px; margin-top: -2px; }
  .hs { display: flex; width: 370px; margin: 0 0 2px 12px; height: 11px; background: #d4d4d4; }
  .hb { width: 10.500px; background: #fff; border: 1px solid #bbb; display: grid; place-items: center; }
  .ht { flex: 1; background: #fff; border: 1px solid #bbb; margin-right: 26px; }
  .status { height: 14px; background: #f3f3f3; display: flex; align-items: center; padding-left: 6px; flex: none; font-size: 8.200px; border-top: 1px solid #ddd; line-height: 10px; }
  .status > span:first-child { margin-right: auto; }
  .vw { width: 29px; height: 13px; display: grid; place-items: center; } .vw.on { background: #c9c9c9; }
  .zm { margin: 0 10px 0 3px; } .pc { margin-right: 5px; letter-spacing: -.3px; }

  .zoombar { width: 34px; height: 164px; margin: 186px 0 0 34px; background: #b9b9b9; border-radius: 3px; display: grid; grid-template-rows: repeat(4, 41px); place-items: center; padding-bottom: 1px; }

  .panel { width: 416px; height: 647px; background: #fff; border-radius: 5px; display: flex; flex-direction: column; font-size: 14px; }
  .ph { height: 38px; display: flex; align-items: center; justify-content: space-between; padding: 0 16px 0 10px; color: #000; }
  .srow { display: flex; height: 52px; padding: 10px 0 0 16px; align-items: flex-start; }
  .srow > svg { margin: 6px 0 0 8.500px; }
  .search { width: 354px; height: 32px; border: 1px solid #b9b9b9; border-radius: 16px; display: flex; align-items: center; padding: 3px 0 0 12px; color: #a3a3a3; gap: 11px; }
  .list { height: 503px; overflow: hidden; position: relative; padding-left: 16px; }
  .p { height: 44px; display: flex; align-items: center; }
  .p:first-child { margin-top: -27px; }
  .av { width: 30px; height: 30px; border-radius: 50%; background: #ebebeb; text-align: center; font-size: 13px; line-height: 31px; color: #333; }
  .av.sm { font-size: 11px; }
  .dv { margin: 0 10px; }
  .nm { flex: 1; color: #111; padding-bottom: 1px; }
  .vd { margin: 9px 12px 0 0; }
  .mm { margin: 9px 40.500px 0 0; }
  .sb { position: absolute; right: 0; top: 290px; width: 8px; height: 211px; border-radius: 4px; background: #d3d3d3; }
  .acts { display: flex; padding: 10px 0 0 17px; gap: 8px; }
  .acts span { height: 32px; border-radius: 16px; background: #dedede; display: grid; place-items: center; }
  .b1 { width: 125px; } .b2 { width: 209px; } .b3 { width: 32px; }

  footer { flex: 1; display: flex; padding: 9px 20px 0 403px; justify-content: space-between; align-items: flex-start; }
  .ctl { display: flex; gap: 8px; font-size: 16px; }
  .pill { height: 44px; border-radius: 22px; background: #fff; box-shadow: 0 1px 5px #0000001c; display: flex; align-items: center; white-space: nowrap; }
  .pill > span { padding-top: 2px; }
  .pill > svg:first-child { margin-top: 1px; }
  .w1 { width: 213px; padding-left: 15px; } .w1 > span { margin-left: 8.500px; }
  .w2 { width: 161px; padding-left: 14px; } .w2 > span { margin-left: 8.500px; }
  .w3 { width: 130px; padding-left: 13px; background: #dedede; color: #b4b4b4; box-shadow: none; } .w3 > span { margin-left: 8px; }
  .w4 { width: 110px; padding-left: 14px; } .w4 > span { margin-left: 6.500px; }
  .ch { margin-left: auto; margin-right: 9.500px; }
  .w2 .ch { margin-right: 10.500px; }
  .rd { width: 44px; justify-content: center; } .red { background: #d4371c; padding-right: 1px; }
  .seg { height: 40px; margin-top: 1px; background: #fff; border-radius: 20px; box-shadow: 0 1px 5px #0000001c; display: flex; font-size: 14px; }
  .seg span { display: flex; align-items: center; }
  .s1 { width: 129px; padding-left: 12px; gap: 7px; color: #0a7aa3; border-right: 1px solid #e6e6e6; }
  .s2 { width: 79px; padding-left: 11px; gap: 8.500px; border-right: 1px solid #e6e6e6; }
  .s3 { width: 40px; justify-content: center; padding-top: 2px; }
</style>
